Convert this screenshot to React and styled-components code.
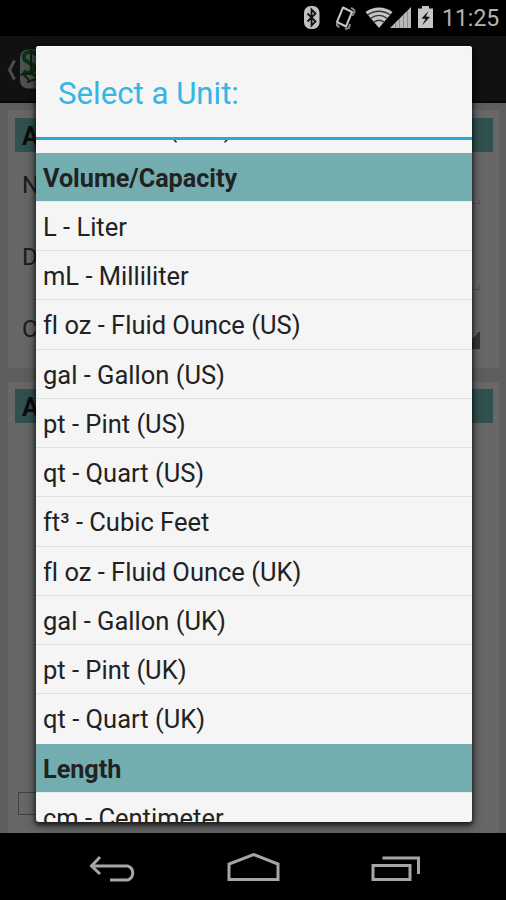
import React from 'react';
import styled, { createGlobalStyle } from 'styled-components';

const GlobalStyle = createGlobalStyle`
    * {
        box-sizing: border-box;
    }

    body {
        margin: 0;
        background-color: #000;
        font-family: Roboto, "Liberation Sans", sans-serif;
    }
`;

const Phone = styled.div`
    position: relative;
    width: 506px;
    height: 900px;
    display: flex;
    flex-direction: column;
    overflow: hidden;
    background-color: #000;
`;

const StatusBar = styled.div`
    height: 36px;
    flex: none;
    display: flex;
    justify-content: flex-end;
    padding-right: 8px;
    color: #b4b4b4;
`;

const StatusIcons = styled.svg`
    width: 140px;
    height: 36px;
    margin-right: 3px;
`;

const Clock = styled.span`
    width: 56px;
    font-size: 23px;
    line-height: 38px;
    white-space: nowrap;
`;

const ActionBar = styled.div`
    height: 67px;
    flex: none;
    display: flex;
    align-items: center;
    padding-left: 6px;
    background-color: #111;
    border-bottom: 2px solid #080808;
`;

const Page = styled.div`
    flex: 1;
    min-height: 0;
    display: flex;
    flex-direction: column;
    gap: 14px;
    padding: 7px 7px 0 8px;
    background-color: #5e5e5e;
`;

const Card = styled.div`
    height: ${({ $height }) => $height}px;
    display: flex;
    flex-direction: column;
    padding: ${({ $top }) => $top}px 6px 0 7px;
    background-color: #676767;
    color: #1c1c1c;
`;

const CardTitle = styled.div`
    height: 34px;
    flex: none;
    padding-left: 7px;
    background-color: #305150;
    color: #0c0c0c;
    font-size: 25px;
    font-weight: 700;
    line-height: 37px;
`;

const Field = styled.div`
    height: 72px;
    flex: none;
    display: flex;
    justify-content: space-between;
    padding: 0 13px 0 7px;
    font-size: 24px;
    line-height: 66px;
`;

const FieldEdge = styled.div`
    width: 20px;
    height: 5px;
    margin-top: ${({ $top }) => $top}px;
    border: 1px solid #565656;
    border-width: 0 1px 1px 0;
`;

const SpinnerMark = styled.div`
    width: 18px;
    height: 18px;
    margin-top: 35px;
    background: linear-gradient(135deg, transparent 50%, #363636 50%);
`;

const CheckBox = styled.div`
    width: 23px;
    height: 23px;
    margin: 369px 0 0 3px;
    border: 1px solid #414141;
`;

const NavBar = styled.div`
    height: 67px;
    flex: none;
    display: flex;
    align-items: center;
    justify-content: center;
    background-color: #000;
`;

const Dialog = styled.div`
    position: absolute;
    top: 46px;
    left: 36px;
    width: 435.5px;
    height: 776px;
    display: flex;
    flex-direction: column;
    overflow: hidden;
    border-radius: 3px;
    background-color: #f5f5f5;
    box-shadow: inset 0 1px 0 #fff, 0 2px 4px 1px rgba(0, 0, 0, 0.65), 0 3px 12px 2px rgba(0, 0, 0, 0.3);
`;

const DialogTitle = styled.div`
    height: 93.5px;
    flex: none;
    padding-left: 22px;
    border-bottom: 3px solid #24a9d8;
    color: #33b5e5;
    font-size: 31.2px;
    line-height: 96px;
`;

/* scrolled part way, so the first and last rows are clipped */
const List = styled.div`
    flex: 1;
    min-height: 0;
    display: flex;
    flex-direction: column;
    overflow: hidden;
`;

const FirstRow = styled.div`
    height: 13.2px;
    flex: none;
    display: flex;
    flex-direction: column;
    justify-content: flex-end;
    overflow: hidden;
`;

const Row = styled.div`
    height: 49.25px;
    flex: none;
    padding-left: 7px;
    border-bottom: 1px solid ${({ $last }) => ($last ? 'transparent' : '#e0e0e0')};
    color: #222;
    font-size: 25.5px;
    line-height: 51px;
    white-space: nowrap;
    font-variant-ligatures: none;
`;

const SectionRow = styled(Row)`
    border-bottom: 1px solid #dff0f0;
    background-color: #74adaf;
    background-clip: padding-box;
    font-size: 25.2px;
    font-weight: 700;
`;

const sections = [
    {
        title: 'Volume/Capacity',
        units: [
            'L - Liter',
            'mL - Milliliter',
            'fl oz - Fluid Ounce (US)',
            'gal - Gallon (US)',
            'pt - Pint (US)',
            'qt - Quart (US)',
            'ft³ - Cubic Feet',
            'fl oz - Fluid Ounce (UK)',
            'gal - Gallon (UK)',
            'pt - Pint (UK)',
            'qt - Quart (UK)',
        ],
    },
    { title: 'Length', units: ['cm - Centimeter'] },
];

function StatusBarIcons() {
    return (
        <StatusIcons viewBox="300 0 140 36" fill="none">
            <rect x="305" y="6" width="15.5" height="23" rx="6.5" fill="#c2c2c2" />
            <path d="M308.5 13.5l8 8-4 4V9.5l4 4-8 8" stroke="#111" strokeWidth="1.8" />
            <path d="M344 7.5l9 4.5-6 14.500-9-4.500z" stroke="#c4c4c4" strokeWidth="2" strokeLinejoin="round" />
            <path d="M352 8c3 1 4 2 3.500 5M338 23c-.5 2 .5 3.500 2.500 4M355.500 11l-2 5M346 29l4-1 1-4" stroke="#888" strokeWidth="2" />
            <path d="M366.500 12C374 6 386 6 393.500 12L380 28z" fill="#c4c4c4" />
            <path d="M368.500 15c7-5 16-5 23 0M371.500 18.500c5.500-4 11.500-4 17 0M375 22c3.500-2.500 6.500-2.500 10 0" stroke="#333" strokeWidth="1.300" />
            <path d="M391 28L412 7V28z" fill="#b8b8b8" />
            <path d="M396.500 23v5M400.500 19v9M404.500 15v13M408.500 11v17" stroke="#8c8c8c" strokeWidth="1" />
            <path d="M419 8.500h4V6h7v2.500h4V28h-15z" fill="#c6c6c6" />
            <path d="M429.500 11l-7 7.500 4 .5-3.500 6.500 8-8.500-4-.5z" fill="#161616" />
        </StatusIcons>
    );
}

function AppLogo() {
    return (
        <svg width="56" height="46" viewBox="0 0 56 46" fill="none">
            <path d="M8.500 14.500L3.500 24l5 9.500" stroke="#4c4c4c" strokeWidth="3" />
            <rect x="14" y="3.500" width="42" height="39" rx="8" fill="#505050" />
            <path d="M30 9C27 4 17 5 18 12c.5 5 11 5 10.500 10-.5 5-8 6-11 3" stroke="#0b3512" strokeWidth="4" />
            <path d="M25 4v23M14.500 29c5-2 10-2 16 1M17 28l6 6M21 36l9-3" stroke="#0a2410" strokeWidth="2.200" />
        </svg>
    );
}

function NavIcons() {
    return (
        <svg width="506" height="67" viewBox="0 833 506 67" fill="none" stroke="#a6a6a6" strokeWidth="3">
            <path d="M100 857l-8.500 9 8.500 8M92 866h35.500a7.300 7.300 0 0 1 0 14H110" />
            <path d="M229 879.500v-15.500l24.500-9.500 24.500 9.500v15.500z" />
            <path d="M373 865.500h37v14h-37zM382.500 858h36v16" />
        </svg>
    );
}

export default function App() {
    return (
        <Phone>
            <GlobalStyle />
            <StatusBar>
                <StatusBarIcons />
                <Clock>11:25</Clock>
            </StatusBar>
            <ActionBar>
                <AppLogo />
            </ActionBar>
            <Page>
                <Card $height={258} $top={8}>
                    <CardTitle>A</CardTitle>
                    <Field>
                        N<FieldEdge $top={47} />
                    </Field>
                    <Field>
                        D<FieldEdge $top={61} />
                    </Field>
                    <Field>
                        C<SpinnerMark />
                    </Field>
                </Card>
                <Card $height={451} $top={7}>
                    <CardTitle>A</CardTitle>
                    <CheckBox />
                </Card>
            </Page>
            <NavBar>
                <NavIcons />
            </NavBar>
            <Dialog>
                <DialogTitle>Select a Unit:</DialogTitle>
                <List>
                    <FirstRow>
                        <Row $last>oz - Ounce (US t)</Row>
                    </FirstRow>
                    {sections.map((section) => (
                        <React.Fragment key={section.title}>
                            <SectionRow>{section.title}</SectionRow>
                            {section.units.map((unit, index) => (
                                <Row key={unit} $last={index === section.units.length - 1}>
                                    {unit}
                                </Row>
                            ))}
                        </React.Fragment>
                    ))}
                </List>
            </Dialog>
        </Phone>
    );
}
